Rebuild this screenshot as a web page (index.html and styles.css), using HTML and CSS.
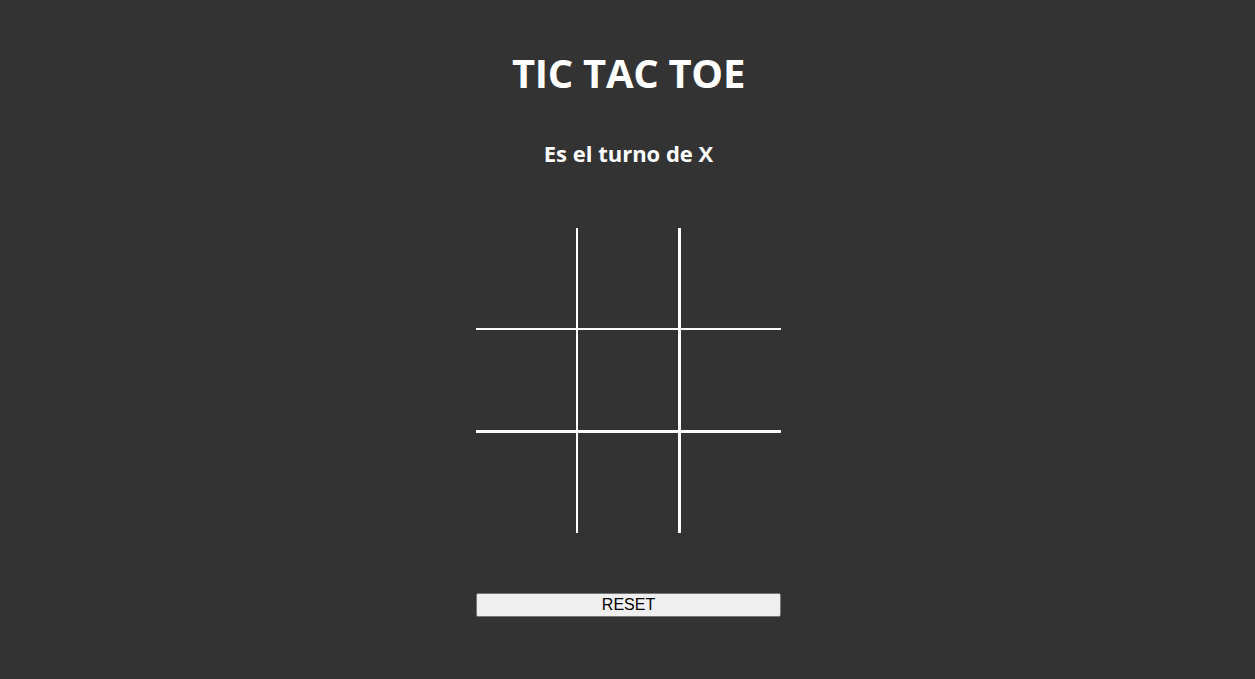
FILE: index.html
```html
<!DOCTYPE html>
<html lang="es">
<head>
<meta charset="utf-8">
<title>Tic Tac Toe</title>
<link rel="stylesheet" href="styles.css">
</head>
<body>
<main class="game">
  <h1 class="title">TIC TAC TOE</h1>
  <h2 class="status">Es el turno de X</h2>
  <div class="board">
    <div class="cell c1"></div>
    <div class="cell c2"></div>
    <div class="cell c3"></div>
    <div class="cell c4"></div>
    <div class="cell c5"></div>
    <div class="cell c6"></div>
    <div class="cell c7"></div>
    <div class="cell c8"></div>
    <div class="cell c9"></div>
  </div>
  <button class="reset" type="button">RESET</button>
</main>
</body>
</html>
```
FILE: styles.css
```css
html, body {
  margin: 0;
  padding: 0;
  background: #333333;
}
body {
  font-family: "Open Sans", "Noto Sans", sans-serif;
  color: #ffffff;
}
.game {
  display: flex;
  flex-direction: column;
  align-items: center;
  padding-top: 40px;
  padding-left: 2px;
}
.title {
  margin: 0;
  font-size: 40px;
  font-weight: 700;
  line-height: 66px;
  letter-spacing: -0.3px;
}
.status {
  margin: 33px 0 0 0;
  font-size: 22px;
  font-weight: 700;
  line-height: 28px;
}
.board {
  margin-top: 61px;
  display: grid;
  grid-template-columns: repeat(3, auto);
}
.cell {
  width: 100px;
  height: 100px;
  border: 0 solid #ffffff;
}
.c1, .c4, .c7 { border-right-width: 1px; }
.c2, .c5, .c8 { border-left-width: 1px; border-right-width: 2px; }
.c3, .c6, .c9 { border-left-width: 1px; }
.c1, .c2, .c3 { border-bottom-width: 1px; }
.c4, .c5, .c6 { border-top-width: 1px; border-bottom-width: 2px; }
.c7, .c8, .c9 { border-top-width: 1px; }
.reset {
  margin-top: 60px;
  width: 305px;
  height: 24px;
  padding: 0;
  background: #efefef;
  border: 1px solid #767676;
  border-radius: 2px;
  font-family: "Liberation Sans", Arial, sans-serif;
  font-size: 16px;
  color: #000000;
}
```
